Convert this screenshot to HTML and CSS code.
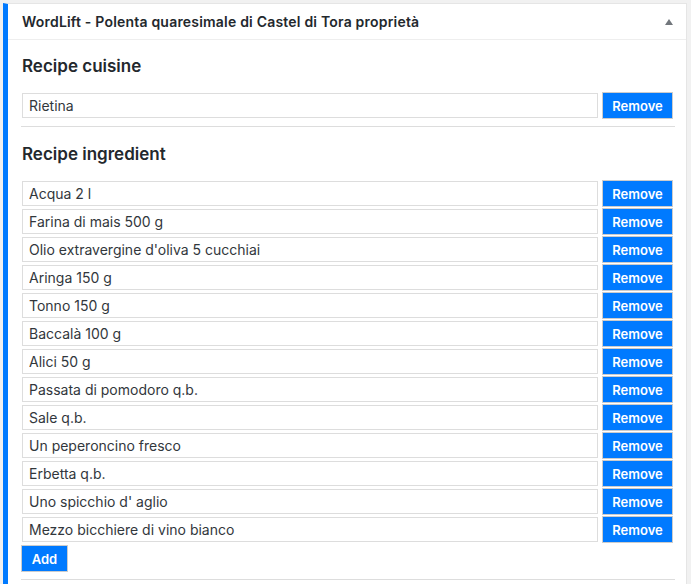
FILE: index.html
```html
<!DOCTYPE html>
<html lang="it">
<head>
<meta charset="utf-8">
<title>WordLift</title>
<link rel="stylesheet" href="styles.css">
</head>
<body>
<div class="panel">
  <div class="panel-header">
    <span class="panel-title">WordLift - Polenta quaresimale di Castel di Tora proprietà</span>
    <span class="toggle"></span>
  </div>
  <div class="panel-body">
    <div class="section">
      <h2 class="section-title">Recipe cuisine</h2>
      <div class="rows">
        <div class="row"><input class="field" type="text" value="Rietina"><button class="btn btn-remove">Remove</button></div>
      </div>
    </div>
    <div class="section">
      <h2 class="section-title">Recipe ingredient</h2>
      <div class="rows">
        <div class="row"><input class="field" type="text" value="Acqua 2 l"><button class="btn btn-remove">Remove</button></div>
        <div class="row"><input class="field" type="text" value="Farina di mais 500 g"><button class="btn btn-remove">Remove</button></div>
        <div class="row"><input class="field" type="text" value="Olio extravergine d'oliva 5 cucchiai"><button class="btn btn-remove">Remove</button></div>
        <div class="row"><input class="field" type="text" value="Aringa 150 g"><button class="btn btn-remove">Remove</button></div>
        <div class="row"><input class="field" type="text" value="Tonno 150 g"><button class="btn btn-remove">Remove</button></div>
        <div class="row"><input class="field" type="text" value="Baccalà 100 g"><button class="btn btn-remove">Remove</button></div>
        <div class="row"><input class="field" type="text" value="Alici 50 g"><button class="btn btn-remove">Remove</button></div>
        <div class="row"><input class="field" type="text" value="Passata di pomodoro q.b."><button class="btn btn-remove">Remove</button></div>
        <div class="row"><input class="field" type="text" value="Sale q.b."><button class="btn btn-remove">Remove</button></div>
        <div class="row"><input class="field" type="text" value="Un peperoncino fresco"><button class="btn btn-remove">Remove</button></div>
        <div class="row"><input class="field" type="text" value="Erbetta q.b."><button class="btn btn-remove">Remove</button></div>
        <div class="row"><input class="field" type="text" value="Uno spicchio d' aglio"><button class="btn btn-remove">Remove</button></div>
        <div class="row"><input class="field" type="text" value="Mezzo bicchiere di vino bianco"><button class="btn btn-remove">Remove</button></div>
      </div>
      <button class="btn btn-add">Add</button>
    </div>
  </div>
</div>
</body>
</html>
```
FILE: styles.css
```css
html, body {
  margin: 0;
  padding: 0;
}
body {
  background: #f1f1f1;
  padding: 3px 4px 0 3px;
  font-family: Inter, "Liberation Sans", Arial, sans-serif;
  color: #23282d;
  height: 584px;
  box-sizing: border-box;
  overflow: hidden;
}
.panel {
  background: #fff;
  border: 1px solid #e5e5e5;
  border-left: 5px solid #007aff;
  border-bottom: none;
  height: 600px;
}
.panel-header {
  height: 35px;
  border-bottom: 1px solid #eee;
  display: flex;
  align-items: center;
  justify-content: space-between;
  padding: 0 13px 0 14px;
}
.panel-title {
  font-size: 14px;
  letter-spacing: 0.2px;
  font-weight: 600;
  color: #23282d;
}
.toggle {
  width: 0;
  height: 0;
  border-left: 4px solid transparent;
  border-right: 4px solid transparent;
  border-bottom: 6px solid #72777c;
  margin-top: 1px;
}
.panel-body {
  padding: 0 11px 0 13px;
}
.section {
  border-bottom: 1px solid #ddd;
  padding-bottom: 7px;
}
.section-title {
  margin: 16px 0 16px 1px;
  font-size: 17px;
  line-height: 20px;
  font-weight: 600;
  color: #23282d;
}
.section + .section .section-title {
  margin-top: 17px;
}
.rows {
  display: flex;
  flex-direction: column;
  gap: 1px;
}
.row {
  display: flex;
  align-items: center;
  gap: 4px;
  height: 27px;
  padding: 0 2px 0 1px;
}
.field {
  flex: 1;
  min-width: 0;
  height: 25px;
  box-sizing: border-box;
  border: 1px solid #ddd;
  padding: 0 6px;
  margin: 0;
  font-family: Inter, "Liberation Sans", Arial, sans-serif;
  font-size: 14px;
  color: #32373c;
  background: #fff;
  outline: none;
}
.btn {
  background: #007aff;
  color: #fff;
  border: 1px solid #ccc;
  font-family: Inter, "Liberation Sans", Arial, sans-serif;
  font-size: 13px;
  font-weight: 600;
  height: 27px;
  box-sizing: border-box;
  padding: 0;
  margin: 0;
  cursor: pointer;
}
.btn-remove {
  width: 71px;
  flex: none;
}
.btn-add {
  width: 47px;
  margin-top: 2px;
  display: block;
}
```
